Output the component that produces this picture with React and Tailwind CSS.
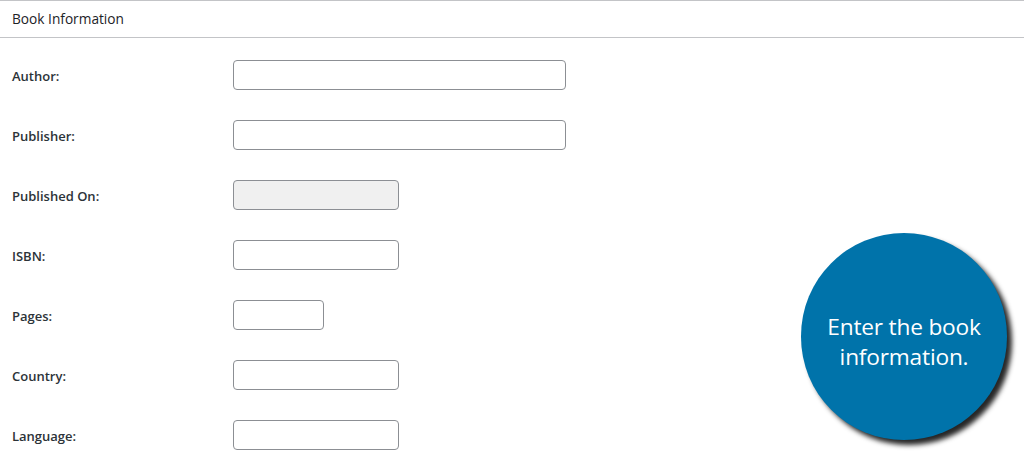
import React from 'react';

const fields = [
  { label: 'Author:', width: 'w-[333px]' },
  { label: 'Publisher:', width: 'w-[333px]' },
  { label: 'Published On:', width: 'w-[166px]', disabled: true },
  { label: 'ISBN:', width: 'w-[166px]' },
  { label: 'Pages:', width: 'w-[91px]' },
  { label: 'Country:', width: 'w-[166px]' },
  { label: 'Language:', width: 'w-[166px]' },
];

const App = () => {
  return (
    <div className="relative w-[1024px] h-[456px] overflow-hidden bg-white font-['Open_Sans',sans-serif] text-[#1d2327]">
      <div className="border-t border-b border-[#c3c4c7] h-[38px] flex items-center px-3">
        <h2 className="text-[13.7px] leading-none -mt-[1px]">Book Information</h2>
      </div>
      <div className="pt-[22px] flex flex-col gap-[30px]">
        {fields.map((f, idx) => (
          <div key={idx} className="flex items-center h-[30px]">
            <label className="w-[233px] pl-3 pt-[3px] text-[13px] font-semibold text-[#2c3338]">{f.label}</label>
            <input
              type="text"
              disabled={f.disabled}
              className={`${f.width} h-[30px] rounded-[4px] border border-[#8c8f94] ${f.disabled ? 'bg-[#f0f0f0]' : 'bg-white'}`}
            />
          </div>
        ))}
      </div>
      <div className="absolute left-[801px] top-[233px] w-[206px] h-[207px] rounded-full bg-[#0073aa] shadow-[5px_5px_5px_rgba(0,0,0,0.85)] flex items-center justify-center">
        <p className="text-white text-[22.7px] leading-[30px] text-center font-['Open_Sans',sans-serif] tracking-[-0.2px] mt-[10px]">
          Enter the book
          <br />
          information.
        </p>
      </div>
    </div>
  );
};

export default App;
